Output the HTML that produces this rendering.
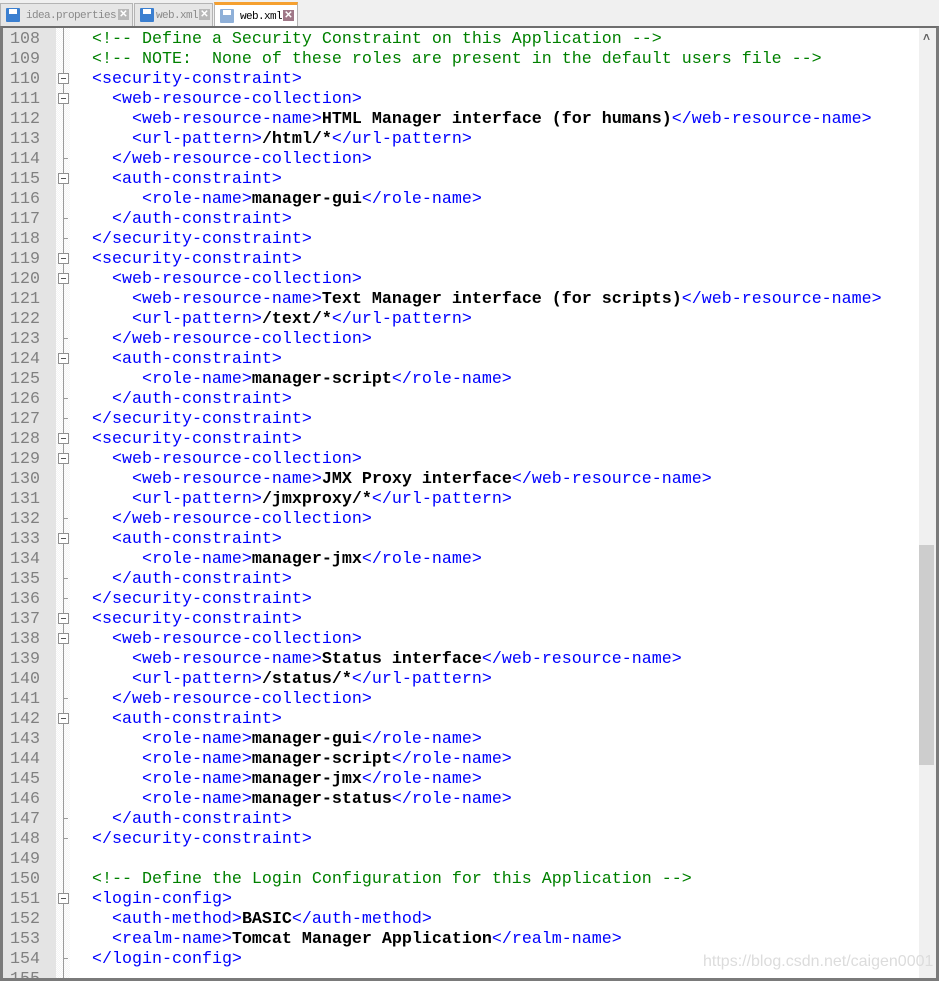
<!DOCTYPE html>
<html><head><meta charset="utf-8">
<style>
*{margin:0;padding:0;box-sizing:border-box}
body{width:939px;height:981px;background:#f0f0f0;position:relative;overflow:hidden;font-family:"Liberation Mono",monospace}
.tab{position:absolute;top:3px;height:23px;border:1px solid #b4b4b4;border-bottom:none;background:#e6e6e6;font:11px "Liberation Mono","Noto Sans CJK SC",monospace;letter-spacing:-0.6px;color:#8a8a8a;line-height:22px}
.tab .ic{position:absolute;left:5px;top:4px;width:14px;height:14px;background:#3b7fd0;border-radius:1px}
.tab .ic:after{content:"";position:absolute;left:3px;top:1px;width:8px;height:5px;background:#fff}
.tab .x{position:absolute;top:5px;width:11px;height:11px;background:#b8b8b8;color:#fff;font:bold 10px/11px "Liberation Sans",sans-serif;letter-spacing:0;text-align:center}
.tab .lb{position:absolute;left:25px;top:1px}
#ed{position:absolute;left:0;top:26px;width:939px;height:955px;border:3px solid #7a7a7a;border-top:2px solid #6e6e6e;background:#fff}
#clip{position:absolute;left:0;top:0;width:939px;height:978px;overflow:hidden}
#ln{position:absolute;left:3px;top:28px;width:53px;height:950px;background:#e4e4e4}
#fm{position:absolute;left:56px;top:28px;width:14px;height:950px;background:repeating-conic-gradient(#f4f4f4 0 25%,#fff 0 50%) 0 0/2px 2px}
#fl{position:absolute;left:63px;top:28px;width:1px;height:950px;background:#9a9a9a}
.l{position:absolute;left:72px;height:20px;line-height:20px;font-size:16.67px;white-space:pre;color:#000}
.n{position:absolute;left:10px;height:20px;line-height:20px;font-size:16.67px;color:#808080}
.t{color:#0000ff}.b{font-weight:bold}.c{color:#008000}
.bx{position:absolute;left:58px;width:11px;height:11px;border:1px solid #909090;background:#fff}
.bx:after{content:"";position:absolute;left:2px;top:4px;width:5px;height:1px;background:#555}
.tk{position:absolute;left:63px;width:5px;height:1px;background:#9a9a9a}
#sb{position:absolute;left:919px;top:28px;width:17px;height:950px;background:#f0f0f0}
#th{position:absolute;left:919px;top:545px;width:15px;height:220px;background:#cdcdcd}
#wm{position:absolute;left:703px;top:953px;font:16px "Liberation Sans",sans-serif;color:#dcdcdc}
</style></head><body>
<div class="tab" style="left:0;width:133px"><div class="ic"></div><span class="lb">idea.properties</span><span class="x" style="left:117px">✕</span></div>
<div class="tab" style="left:134px;width:79px"><div class="ic"></div><span class="lb" style="left:21px">web.xml</span><span class="x" style="left:64px">✕</span></div>
<div class="tab" style="left:214px;width:84px;top:2px;height:25px;background:#fff;border-top:3px solid #f5a030;color:#000"><div class="ic" style="background:#8fb0d8"></div><span class="lb">web.xml</span><span class="x" style="left:68px;background:#a07888">✕</span></div>
<div id="ed"></div>
<div id="clip">
<div id="ln"></div><div id="fm"></div><div id="fl"></div>
<div id="sb"></div><div id="th"></div>
<div style="position:absolute;left:923px;top:30px;color:#606060;font:bold 12px 'Liberation Sans',sans-serif">&#x2C4;</div>
<div id="lines"></div>
<div id="wm">https://blog.csdn.net/caigen0001</div>
</div>
<script>
var L=[
[108,'  <c>&lt;!-- Define a Security Constraint on this Application --&gt;</c>'],
[109,'  <c>&lt;!-- NOTE:  None of these roles are present in the default users file --&gt;</c>'],
[110,'  <t>&lt;security-constraint&gt;</t>','o'],
[111,'    <t>&lt;web-resource-collection&gt;</t>','o'],
[112,'      <t>&lt;web-resource-name&gt;</t><b>HTML Manager interface (for humans)</b><t>&lt;/web-resource-name&gt;</t>'],
[113,'      <t>&lt;url-pattern&gt;</t><b>/html/*</b><t>&lt;/url-pattern&gt;</t>'],
[114,'    <t>&lt;/web-resource-collection&gt;</t>','e'],
[115,'    <t>&lt;auth-constraint&gt;</t>','o'],
[116,'       <t>&lt;role-name&gt;</t><b>manager-gui</b><t>&lt;/role-name&gt;</t>'],
[117,'    <t>&lt;/auth-constraint&gt;</t>','e'],
[118,'  <t>&lt;/security-constraint&gt;</t>','e'],
[119,'  <t>&lt;security-constraint&gt;</t>','o'],
[120,'    <t>&lt;web-resource-collection&gt;</t>','o'],
[121,'      <t>&lt;web-resource-name&gt;</t><b>Text Manager interface (for scripts)</b><t>&lt;/web-resource-name&gt;</t>'],
[122,'      <t>&lt;url-pattern&gt;</t><b>/text/*</b><t>&lt;/url-pattern&gt;</t>'],
[123,'    <t>&lt;/web-resource-collection&gt;</t>','e'],
[124,'    <t>&lt;auth-constraint&gt;</t>','o'],
[125,'       <t>&lt;role-name&gt;</t><b>manager-script</b><t>&lt;/role-name&gt;</t>'],
[126,'    <t>&lt;/auth-constraint&gt;</t>','e'],
[127,'  <t>&lt;/security-constraint&gt;</t>','e'],
[128,'  <t>&lt;security-constraint&gt;</t>','o'],
[129,'    <t>&lt;web-resource-collection&gt;</t>','o'],
[130,'      <t>&lt;web-resource-name&gt;</t><b>JMX Proxy interface</b><t>&lt;/web-resource-name&gt;</t>'],
[131,'      <t>&lt;url-pattern&gt;</t><b>/jmxproxy/*</b><t>&lt;/url-pattern&gt;</t>'],
[132,'    <t>&lt;/web-resource-collection&gt;</t>','e'],
[133,'    <t>&lt;auth-constraint&gt;</t>','o'],
[134,'       <t>&lt;role-name&gt;</t><b>manager-jmx</b><t>&lt;/role-name&gt;</t>'],
[135,'    <t>&lt;/auth-constraint&gt;</t>','e'],
[136,'  <t>&lt;/security-constraint&gt;</t>','e'],
[137,'  <t>&lt;security-constraint&gt;</t>','o'],
[138,'    <t>&lt;web-resource-collection&gt;</t>','o'],
[139,'      <t>&lt;web-resource-name&gt;</t><b>Status interface</b><t>&lt;/web-resource-name&gt;</t>'],
[140,'      <t>&lt;url-pattern&gt;</t><b>/status/*</b><t>&lt;/url-pattern&gt;</t>'],
[141,'    <t>&lt;/web-resource-collection&gt;</t>','e'],
[142,'    <t>&lt;auth-constraint&gt;</t>','o'],
[143,'       <t>&lt;role-name&gt;</t><b>manager-gui</b><t>&lt;/role-name&gt;</t>'],
[144,'       <t>&lt;role-name&gt;</t><b>manager-script</b><t>&lt;/role-name&gt;</t>'],
[145,'       <t>&lt;role-name&gt;</t><b>manager-jmx</b><t>&lt;/role-name&gt;</t>'],
[146,'       <t>&lt;role-name&gt;</t><b>manager-status</b><t>&lt;/role-name&gt;</t>'],
[147,'    <t>&lt;/auth-constraint&gt;</t>','e'],
[148,'  <t>&lt;/security-constraint&gt;</t>','e'],
[149,''],
[150,'  <c>&lt;!-- Define the Login Configuration for this Application --&gt;</c>'],
[151,'  <t>&lt;login-config&gt;</t>','o'],
[152,'    <t>&lt;auth-method&gt;</t><b>BASIC</b><t>&lt;/auth-method&gt;</t>'],
[153,'    <t>&lt;realm-name&gt;</t><b>Tomcat Manager Application</b><t>&lt;/realm-name&gt;</t>'],
[154,'  <t>&lt;/login-config&gt;</t>','e'],
[155,'']];
var h='';
L.forEach(function(r){var y=28+(r[0]-108)*20;var ty=y+2;
var s=r[1].replace(/<t>/g,'<span class="t">').replace(/<\/t>/g,'</span>').replace(/<b>/g,'<span class="b">').replace(/<\/b>/g,'</span>').replace(/<c>/g,'<span class="c">').replace(/<\/c>/g,'</span>');
h+='<div class="n" style="top:'+ty+'px">'+r[0]+'</div><div class="l" style="top:'+ty+'px">'+s+'</div>';
if(r[2]=='o')h+='<div class="bx" style="top:'+(y+5)+'px"></div>';
if(r[2]=='e')h+='<div class="tk" style="top:'+(y+10)+'px"></div>';});
document.getElementById('lines').innerHTML=h;
</script>
</body></html>
